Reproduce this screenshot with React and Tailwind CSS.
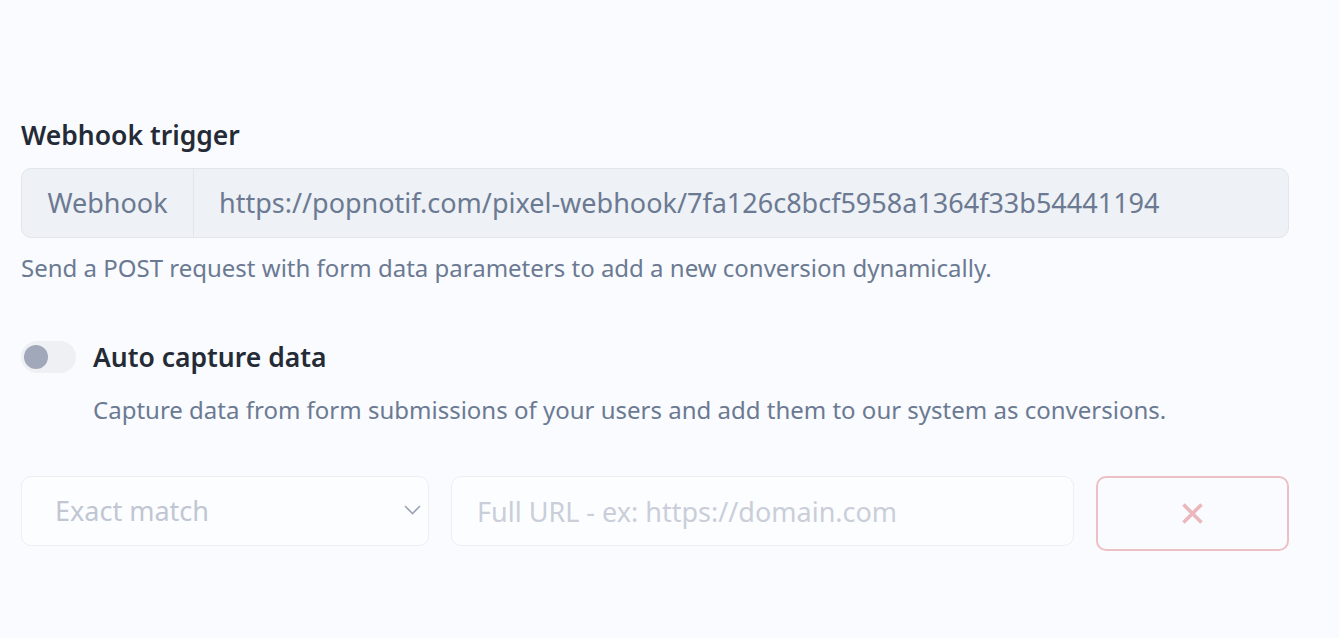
import React, { useState } from 'react';

export default function App() {
  const [auto, setAuto] = useState(false);
  const [match, setMatch] = useState('exact');
  const [url, setUrl] = useState('');

  return (
    <div className="min-h-[638px] w-full bg-[#f9fbfe] font-['Noto_Sans',sans-serif]">
      <div className="pl-[21px] pr-[50px] pt-[117px]">
        <h2 className="text-[26.5px] leading-[36px] font-semibold text-[#252b36]">Webhook trigger</h2>

        <div className="mt-[15px] flex h-[70px] w-[1268px] items-stretch overflow-hidden rounded-[10px] border border-[#e2e6ec] bg-[#eef1f5]">
          <div className="flex w-[172px] items-center justify-center border-r border-[#e2e6ec] text-[27px] text-[#6b7a92]">
            Webhook
          </div>
          <div className="flex flex-1 items-center pl-[25px] text-[27px] text-[#6b7a92]">
            https://popnotif.com/pixel-webhook/7fa126c8bcf5958a1364f33b54441194
          </div>
        </div>

        <p className="mt-[14px] text-[24px] leading-[32px] text-[#6b7a92]">
          Send a POST request with form data parameters to add a new conversion dynamically.
        </p>

        <div className="mt-[55px] flex items-center gap-[17px]">
          <button
            type="button"
            onClick={() => setAuto(!auto)}
            className={`relative h-[32px] w-[55px] rounded-full ${auto ? 'bg-[#5c7cfa]' : 'bg-[#eef0f4]'}`}
          >
            <span
              className={`absolute top-[4px] h-[24px] w-[24px] rounded-full ${auto ? 'left-[27px] bg-white' : 'left-[3px] bg-[#a0a8b9]'}`}
            />
          </button>
          <span className="text-[26.5px] leading-[36px] font-semibold text-[#252b36]">Auto capture data</span>
        </div>

        <p className="mt-[19px] pl-[72px] text-[24px] leading-[32px] text-[#6b7a92]">
          Capture data from form submissions of your users and add them to our system as conversions.
        </p>

        <div className="mt-[50px] flex w-[1268px] items-start gap-[22px]">
          <div className="relative w-[408px]">
            <select
              value={match}
              onChange={(e) => setMatch(e.target.value)}
              className="h-[70px] w-full appearance-none rounded-[10px] border border-[#eceef3] bg-[#fcfdff] pl-[33px] text-[27px] text-[#c0c6d2] outline-none"
            >
              <option value="exact">Exact match</option>
              <option value="contains">Contains</option>
              <option value="starts">Starts with</option>
            </select>
            <svg
              className="pointer-events-none absolute right-[8px] top-[29px]"
              width="17"
              height="10"
              viewBox="0 0 17 10"
              fill="none"
            >
              <polyline points="1,1 8.5,8.5 16,1" stroke="#9aa3b2" strokeWidth="1.6" />
            </svg>
          </div>
          <input
            type="text"
            value={url}
            onChange={(e) => setUrl(e.target.value)}
            placeholder="Full URL - ex: https://domain.com"
            className="h-[70px] w-[623px] rounded-[10px] border border-[#eceef3] bg-[#fcfdff] px-[25px] text-[27px] text-[#4b5566] placeholder-[#c9ced9] outline-none"
          />
          <button
            type="button"
            className="flex h-[75px] flex-1 items-center justify-center rounded-[10px] border-2 border-[#ecc0c4] bg-transparent"
          >
            <svg width="21" height="21" viewBox="0 0 21 21" fill="none">
              <line x1="1.5" y1="1.5" x2="19.5" y2="19.5" stroke="#eab8bc" strokeWidth="3.6" />
              <line x1="19.5" y1="1.5" x2="1.5" y2="19.5" stroke="#eab8bc" strokeWidth="3.6" />
            </svg>
          </button>
        </div>
      </div>
    </div>
  );
}
